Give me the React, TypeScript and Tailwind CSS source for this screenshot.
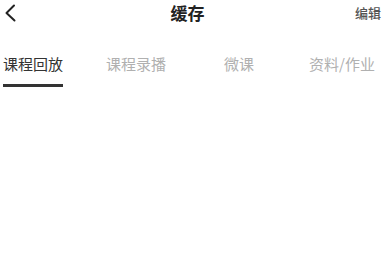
import React from "react";

const tabs = ["课程回放", "课程录播", "微课", "资料/作业"];

export default function App() {
  return (
    <div
      className="w-[383px] h-[270px] bg-white overflow-hidden"
      style={{ fontFamily: '"Noto Sans CJK SC", "Noto Sans", sans-serif' }}
    >
      <div className="flex h-[26px] items-center">
        <div className="w-[20px] h-[26px] flex items-center">
          <svg width="20" height="26" viewBox="0 0 20 26" fill="none">
            <path d="M14 5.5 L6.5 13 L14.5 20.5" stroke="#222" strokeWidth="2" strokeLinecap="round" strokeLinejoin="round" />
          </svg>
        </div>
        <div className="flex-1 text-center text-[17px] leading-[26px] font-bold text-[#222]">缓存</div>
        <div className="pr-[2px] text-[13px] leading-[26px] font-medium text-[#555]">编辑</div>
      </div>
      <div className="flex gap-[37px] mt-[28px]">
        {tabs.map((t, i) => (
          <div key={t} className="w-[66px] flex flex-col items-center shrink-0">
            <div
              className={
                "text-[15px] leading-[20px] whitespace-nowrap " +
                (i === 0 ? "text-[#333]" : "text-[#b0b0b0]")
              }
            >
              {t}
            </div>
            {i === 0 ? (
              <div className="mt-[10px] w-[60px] h-[3px] bg-[#333]" />
            ) : null}
          </div>
        ))}
      </div>
    </div>
  );
}
